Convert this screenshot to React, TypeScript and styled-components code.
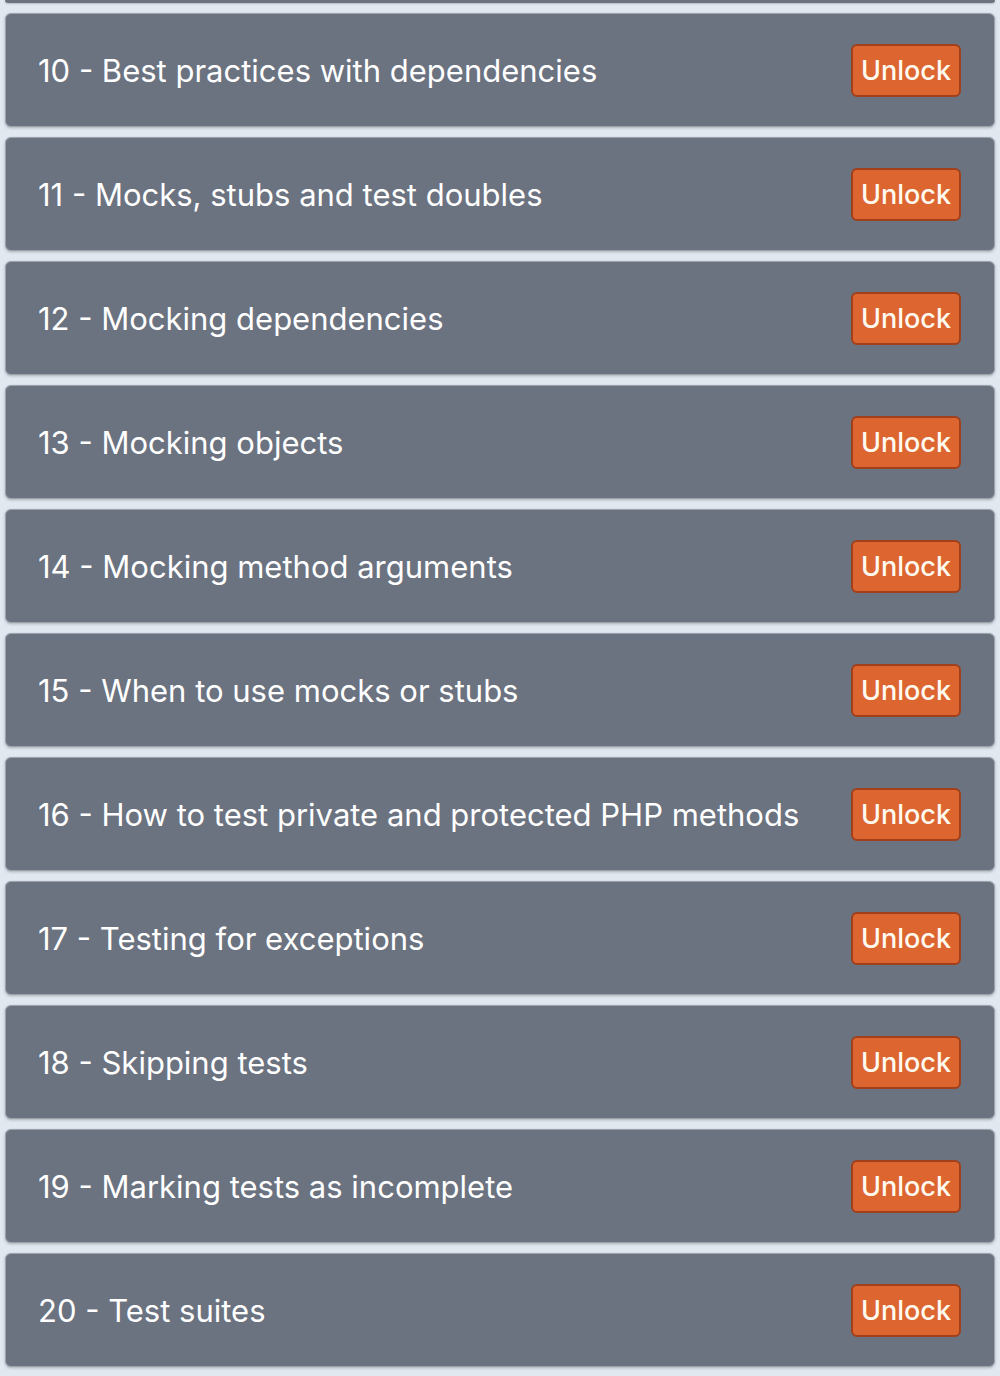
import styled, { createGlobalStyle } from "styled-components";

const lessons = [
  "10 - Best practices with dependencies",
  "11 - Mocks, stubs and test doubles",
  "12 - Mocking dependencies",
  "13 - Mocking objects",
  "14 - Mocking method arguments",
  "15 - When to use mocks or stubs",
  "16 - How to test private and protected PHP methods",
  "17 - Testing for exceptions",
  "18 - Skipping tests",
  "19 - Marking tests as incomplete",
  "20 - Test suites",
];

const GlobalStyle = createGlobalStyle`
  html, body {
    margin: 0;
    padding: 0;
    background: #e2e8f0;
    overflow: hidden;
  }
  body {
    font-family: Inter, "Liberation Sans", sans-serif;
    -webkit-font-smoothing: antialiased;
  }
`;

export default function App() {
  return (
    <>
      <GlobalStyle />
      <Page>
        <LessonList>
          {/* bottom edge of the card scrolled out of view */}
          <ScrolledEdge aria-hidden />
          {lessons.map((title) => (
            <LessonCard key={title}>
              <LessonTitle>{title}</LessonTitle>
              <UnlockButton>Unlock</UnlockButton>
            </LessonCard>
          ))}
        </LessonList>
      </Page>
    </>
  );
}

const Page = styled.div`
  height: 1376px;
  padding: 0 5px;
  overflow: hidden;
`;

const LessonList = styled.ul`
  list-style: none;
  margin: 0;
  padding: 0;
  display: flex;
  flex-direction: column;
  gap: 10px;
`;

const ScrolledEdge = styled.li`
  height: 3px;
  background: #6b7280;
  border-radius: 0 0 6px 6px;
  box-shadow: 0 1px 2px rgba(0, 0, 0, 0.2);
`;

const LessonCard = styled.li`
  box-sizing: border-box;
  height: 114px;
  flex-shrink: 0;
  display: flex;
  align-items: center;
  justify-content: space-between;
  padding: 0 33px 0 32px;
  background: #6b7280;
  border: 1px solid #9ca3af;
  border-radius: 6px;
  box-shadow: 0 1px 3px rgba(0, 0, 0, 0.25);
`;

const LessonTitle = styled.span`
  color: #ffffff;
  font-size: 31px;
  font-weight: 400;
`;

const UnlockButton = styled.button`
  box-sizing: border-box;
  width: 110px;
  height: 53px;
  background: #dc6530;
  color: #fffaf0;
  border: 2px solid #a2401c;
  border-radius: 6px;
  font-family: Inter, "Liberation Sans", sans-serif;
  font-size: 27px;
  font-weight: 500;
  padding: 0;
  cursor: pointer;
`;
